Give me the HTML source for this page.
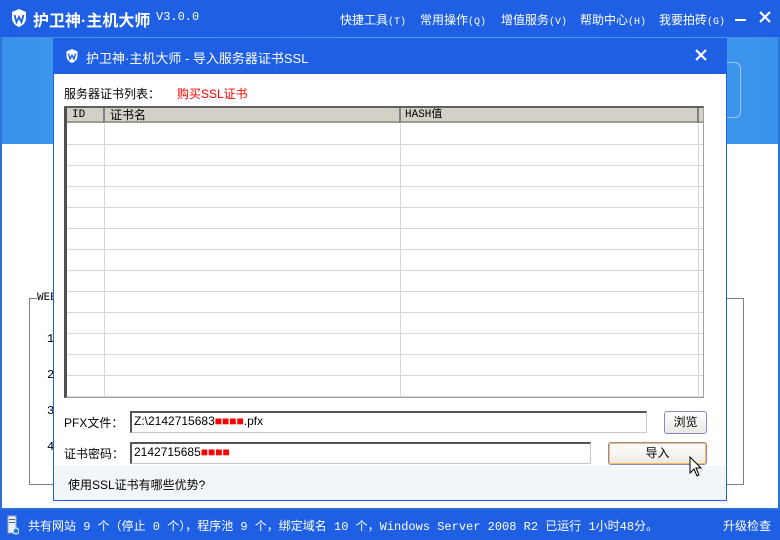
<!DOCTYPE html>
<html><head><meta charset="utf-8"><style>
*{margin:0;padding:0;box-sizing:border-box}
body{width:780px;height:540px;overflow:hidden;position:relative;background:#fff;font-family:"Liberation Sans","Noto Sans CJK SC",sans-serif;font-size:12px;color:#000}
.a{position:absolute}
.mono{font-family:"Liberation Mono","Noto Sans CJK SC",monospace}
.m{position:absolute;top:11px;color:#fff;font-size:12px;white-space:nowrap}
.m span{font-size:10px;font-family:"Liberation Mono",monospace}
</style></head><body>
<div class="a" style="left:0;top:0;width:780px;height:37px;background:#1e5fe3"></div>
<svg class="a" style="left:10px;top:8px" width="18" height="20" viewBox="0 0 18 20"><path d="M9 1 L16 4 V10 C16 15 12 18 9 19 C6 18 2 15 2 10 V4 Z" fill="#fff"/><path d="M4.5 7 L6.5 14 L9 9 L11.5 14 L13.5 7" stroke="#1e5fe3" stroke-width="1.8" fill="none"/></svg>
<div class="a" style="left:33px;top:7px;color:#fff;font-size:16px;font-weight:bold">护卫神·主机大师</div>
<div class="a mono" style="left:156px;top:10px;color:#fff;font-size:12px">V3.0.0</div>
<div class="m" style="left:340px">快捷工具<span>(T)</span></div>
<div class="m" style="left:420px">常用操作<span>(Q)</span></div>
<div class="m" style="left:501px">增值服务<span>(V)</span></div>
<div class="m" style="left:580px">帮助中心<span>(H)</span></div>
<div class="m" style="left:659px">我要拍砖<span>(G)</span></div>
<div class="a" style="left:735px;top:19px;width:11px;height:2px;background:#fff"></div>
<svg class="a" style="left:758px;top:10px" width="14" height="14" viewBox="0 0 14 14"><path d="M2 2 L12 12 M12 2 L2 12" stroke="#fff" stroke-width="2.2"/></svg>
<div class="a" style="left:0;top:37px;width:780px;height:473px;border:2px solid #2a73d8;border-top:none;background:#fff"></div>
<div class="a" style="left:2px;top:37px;width:776px;height:107px;background:linear-gradient(90deg,#3a92ec,#4aa2f2 60%,#3a92ec)"></div>
<svg class="a" style="left:28px;top:58px" width="40" height="70" viewBox="0 0 40 70"><path d="M30 4 L40 10 V40 C40 55 32 64 26 68 L26 4 Z" fill="#fff" opacity=".9"/></svg>
<div class="a" style="left:727px;top:62px;width:14px;height:56px;border:1px solid #9cc8f5;border-left:none;border-radius:0 6px 6px 0"></div>
<div class="a" style="left:29px;top:298px;width:715px;height:187px;border:1px solid #808080"></div>
<div class="a mono" style="left:37px;top:292px;background:#fff;font-size:11px">WEB</div>
<div class="a mono" style="left:47px;top:332px">1</div>
<div class="a mono" style="left:47px;top:368px">2</div>
<div class="a mono" style="left:47px;top:404px">3</div>
<div class="a mono" style="left:47px;top:440px">4</div>
<div class="a" style="left:0;top:510px;width:780px;height:30px;background:#1e5fe3"></div>
<svg class="a" style="left:7px;top:515px" width="12" height="20" viewBox="0 0 12 20"><rect x="1" y="1" width="8" height="17" fill="#e8eef8" stroke="#9ab"/><rect x="2" y="4" width="6" height="1" fill="#567"/><rect x="2" y="7" width="6" height="1" fill="#567"/><circle cx="9" cy="16" r="3" fill="#2b7fd8" stroke="#fff"/></svg>
<div class="a mono" style="left:28px;top:517px;color:#fff;font-size:12px;white-space:nowrap">共有网站 9 个（停止 0 个），程序池 9 个，绑定域名 10 个，Windows Server 2008 R2 已运行 1小时48分。</div>
<div class="a" style="left:723px;top:517px;color:#fff;font-size:12px">升级检查</div>
<div class="a" style="left:53px;top:38px;width:674px;height:463px;border:1px solid #1e5fe3;background:#fff"></div>
<div class="a" style="left:53px;top:38px;width:674px;height:36px;background:#1e5fe3"></div>
<svg class="a" style="left:65px;top:48px" width="14" height="16" viewBox="0 0 18 20"><path d="M9 1 L16 4 V10 C16 15 12 18 9 19 C6 18 2 15 2 10 V4 Z" fill="#fff"/><path d="M4.5 7 L6.5 14 L9 9 L11.5 14 L13.5 7" stroke="#1e5fe3" stroke-width="1.8" fill="none"/></svg>
<div class="a" style="left:86px;top:48px;color:#fff;font-size:13px">护卫神·主机大师 - 导入服务器证书SSL</div>
<svg class="a" style="left:694px;top:48px" width="14" height="14" viewBox="0 0 14 14"><path d="M2 2 L12 12 M12 2 L2 12" stroke="#fff" stroke-width="2.2"/></svg>
<div class="a" style="left:64px;top:85px">服务器证书列表：</div>
<div class="a" style="left:177px;top:85px;color:#f00">购买SSL证书</div>
<div class="a" style="left:64px;top:106px;width:640px;height:292px;border:1px solid #a0a0a0;border-left:3px solid #505050;border-top:2px solid #606060;background:#fff;overflow:hidden">
<div style="position:absolute;left:0;top:0;width:640px;height:15px;background:#d4d0c8;border-bottom:2px solid #a09c94"></div>
<div style="position:absolute;left:0;top:0;width:38px;height:15px;border-right:2px solid #808080"></div>
<div style="position:absolute;left:38px;top:0;width:296px;height:15px;border-right:2px solid #808080"></div>
<div style="position:absolute;left:334px;top:0;width:298px;height:15px;border-right:2px solid #808080"></div>
<div class="mono" style="position:absolute;left:5px;top:0;font-size:11px;line-height:14px">ID</div>
<div style="position:absolute;left:43px;top:0;font-size:12px;line-height:14px">证书名</div>
<div class="mono" style="position:absolute;left:338px;top:0;font-size:11px;line-height:14px">HASH值</div>
<div style="position:absolute;left:37px;top:16px;width:1px;height:280px;background:#d8d6d0"></div>
<div style="position:absolute;left:333px;top:16px;width:1px;height:280px;background:#d8d6d0"></div>
<div style="position:absolute;left:631px;top:16px;width:1px;height:280px;background:#d8d6d0"></div>
<div style="position:absolute;left:0;top:16px;width:640px;height:280px;background:repeating-linear-gradient(180deg,transparent 0,transparent 20px,#d8d6d0 20px,#d8d6d0 21px)"></div>
</div>
<div class="a" style="left:64px;top:414px">PFX文件：</div>
<div class="a" style="left:130px;top:411px;width:517px;height:22px;border:1px solid #ccc8c0;border-top:2px solid #555;border-left:2px solid #555;padding:1px 2px">Z:\2142715683<span style="color:#f00">■■■■</span>.pfx</div>
<div class="a" style="left:664px;top:411px;width:43px;height:23px;border:1px solid #8a86c8;border-radius:3px;background:linear-gradient(#fff,#ece9e2);text-align:center;line-height:21px">浏览</div>
<div class="a" style="left:64px;top:445px">证书密码：</div>
<div class="a" style="left:130px;top:442px;width:461px;height:22px;border:1px solid #ccc8c0;border-top:2px solid #555;border-left:2px solid #555;padding:1px 2px">2142715685<span style="color:#f00">■■■■</span></div>
<div class="a" style="left:608px;top:442px;width:99px;height:23px;border:1px solid #8a86c8;border-radius:3px;background:linear-gradient(#fff,#ece9e2);box-shadow:inset 0 0 0 1px #f8c050;text-align:center;line-height:21px">导入</div>
<div class="a" style="left:54px;top:466px;width:672px;height:34px;background:#f3f6f9"></div>
<div class="a" style="left:68px;top:476px">使用SSL证书有哪些优势?</div>
<svg class="a" style="left:689px;top:456px" width="14" height="22" viewBox="0 0 14 22"><path d="M1 1 V17 L5 13 L8 20 L10 19 L7 12 L12 12 Z" fill="#fff" stroke="#000"/></svg>
</body></html>
